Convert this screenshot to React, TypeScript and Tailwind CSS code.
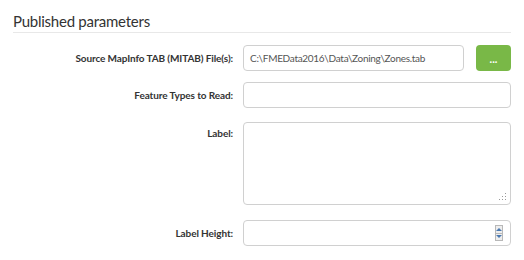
import React from "react";

function Row({ label, top, children }: { label: string; top?: boolean; children: React.ReactNode }) {
  return (
    <div className={`flex gap-[10px] ${top ? "items-start" : "items-center"}`}>
      <div className={`w-[220px] shrink-0 text-right text-[10px] font-bold text-[#333] tracking-[-0.1px] ${top ? "pt-[4px]" : ""}`}>
        {label}
      </div>
      <div className="flex-1 flex gap-[12px]">{children}</div>
    </div>
  );
}

export default function App() {
  return (
    <div className="w-[524px] h-[260px] bg-white pl-[13px] pr-[13px] pt-[11px] font-['Lato','Open_Sans',sans-serif]">
      <h2 className="text-[15px] leading-[20px] text-[#333] tracking-[-0.25px] pb-[1px] border-b border-[#e8e8e8]">
        Published parameters
      </h2>
      <div className="flex flex-col gap-[11px] mt-[12px]">
        <Row label="Source MapInfo TAB (MITAB) File(s):">
          <div className="flex-1 h-[26px] border border-[#d0d0d0] rounded-[4px] flex items-center px-[6px] text-[10px] tracking-[-0.3px] text-[#555]">
            C:\FMEData2016\Data\Zoning\Zones.tab
          </div>
          <button className="w-[35px] h-[26px] rounded-[4px] bg-[#79b847] text-white text-[11px] font-bold leading-none">
            ...
          </button>
        </Row>
        <Row label="Feature Types to Read:">
          <div className="flex-1 h-[26px] border border-[#d0d0d0] rounded-[4px]" />
        </Row>
        <div className="mt-[3px]">
          <Row label="Label:" top>
            <div className="flex-1 h-[83px] border border-[#d0d0d0] rounded-[4px] relative">
              <svg width="8" height="8" viewBox="0 0 8 8" className="absolute right-[3px] bottom-[3px]">
                <rect x="6" y="0" width="1" height="1" fill="#999" />
                <rect x="3" y="3" width="1" height="1" fill="#999" />
                <rect x="6" y="3" width="1" height="1" fill="#999" />
                <rect x="0" y="6" width="1" height="1" fill="#999" />
                <rect x="3" y="6" width="1" height="1" fill="#999" />
                <rect x="6" y="6" width="1" height="1" fill="#999" />
              </svg>
            </div>
          </Row>
        </div>
        <div className="mt-[4px]">
          <Row label="Label Height:">
            <div className="flex-1 h-[26px] border border-[#d0d0d0] rounded-[4px] flex items-center justify-end pr-[7px]">
              <div className="w-[8px] h-[16px] border border-[#b8b8b8] flex flex-col">
                <div className="flex-1 flex items-center justify-center bg-[#eee] border-b border-[#b8b8b8]">
                  <div className="w-0 h-0 border-l-[3px] border-r-[3px] border-b-[3px] border-l-transparent border-r-transparent border-b-[#4a78b0]" />
                </div>
                <div className="flex-1 flex items-center justify-center bg-[#eee]">
                  <div className="w-0 h-0 border-l-[3px] border-r-[3px] border-t-[3px] border-l-transparent border-r-transparent border-t-[#4a78b0]" />
                </div>
              </div>
            </div>
          </Row>
        </div>
      </div>
    </div>
  );
}
